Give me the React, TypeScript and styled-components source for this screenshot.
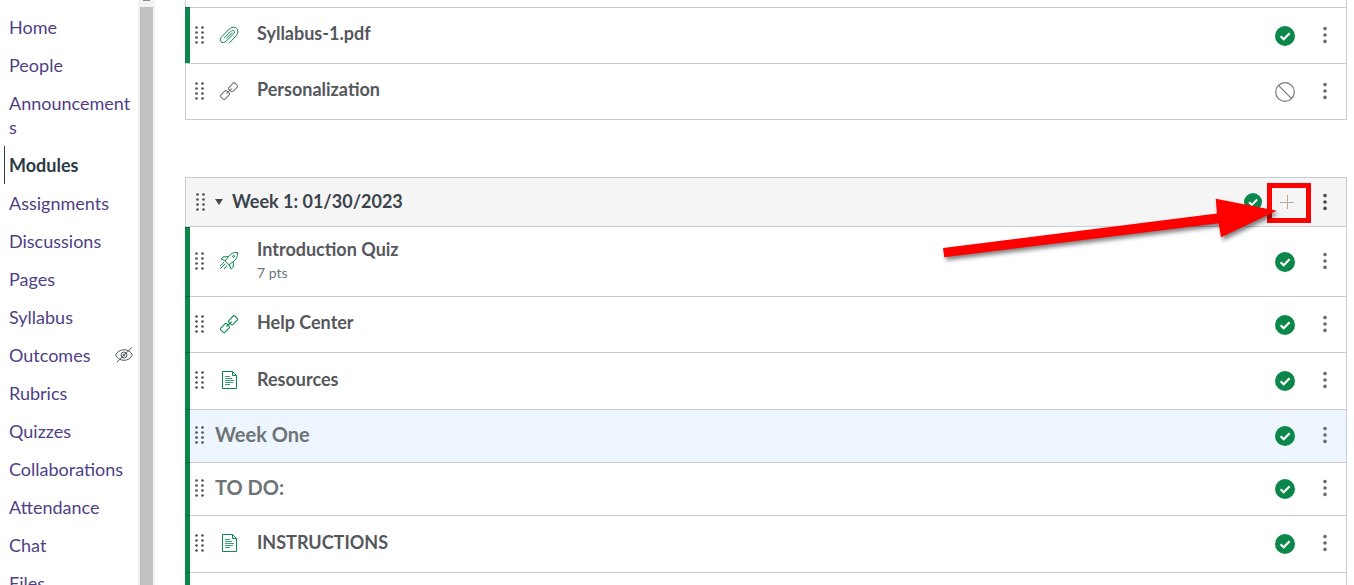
import React from "react";
import styled, { createGlobalStyle } from "styled-components";

const GlobalStyle = createGlobalStyle`
  * { box-sizing: border-box; }
  html, body { margin: 0; padding: 0; }
  body {
    background: #fff;
    font-family: Lato, "Liberation Sans", sans-serif;
    overflow: hidden;
  }
  ul { list-style: none; margin: 0; padding: 0; }
`;

const line = "#c7cdd1";
const green = "#0b874b";

const Page = styled.div`
  display: flex;
  height: 100vh;
  overflow: hidden;
`;

const Sidebar = styled.nav`
  flex: 0 0 138px;
  padding: 8px 5px 0 4px;
`;

const NavLink = styled.a<{ $active?: boolean }>`
  display: flex;
  align-items: center;
  justify-content: space-between;
  padding: 7px 0 7px 4px;
  border-left: 1px solid ${(p) => (p.$active ? "#2d3b45" : "transparent")};
  color: ${(p) => (p.$active ? "#2d3b45" : "#4f3f86")};
  font-size: 18px;
  font-weight: ${(p) => (p.$active ? 700 : 400)};
  line-height: 24px;
  text-decoration: none;
  overflow-wrap: anywhere;
`;

const ScrollTrack = styled.div`
  flex: 0 0 17px;
  display: flex;
  flex-direction: column;
  align-items: center;
  background: #f1f1f1;
`;

const ScrollArrow = styled.div`
  width: 7px;
  height: 1px;
  margin-bottom: 6px;
  background: #8a8a8a;
`;

const ScrollThumb = styled.div`
  flex: 1;
  width: 13px;
  background: #c1c1c1;
`;

const Main = styled.main`
  flex: 1;
  min-width: 0;
  padding: 0 7px 0 30px;
`;

const Module = styled.section`
  position: relative;
  margin-bottom: 57px;
`;

const ModuleHeader = styled.header`
  display: flex;
  align-items: center;
  height: 50px;
  padding: 0 10px;
  border: 1px solid ${line};
  background: #f5f5f5;
`;

const ModuleTitle = styled.h2`
  flex: 1;
  margin: 0;
  padding-bottom: 3px;
  color: #3a444b;
  font-size: 18px;
  font-weight: 700;
  line-height: 24px;
`;

const Items = styled.ul``;

const Row = styled.li<{ $height: number }>`
  display: flex;
  height: ${(p) => p.$height + 1}px;
  margin-top: -1px;
  &:first-child { margin-top: 0; }
`;

const Strip = styled.div<{ $published: boolean }>`
  flex: 0 0 5px;
  border: 1px solid ${(p) => (p.$published ? "#07683a" : line)};
  border-left: ${(p) => (p.$published ? "0" : `1px solid ${line}`)};
  border-right: 0;
  background: ${(p) => (p.$published ? green : "transparent")};
`;

const RowBody = styled.div<{ $highlight?: boolean }>`
  flex: 1;
  display: flex;
  align-items: center;
  padding: 0 10px 2px 5px;
  border: 1px solid ${line};
  border-left: 0;
  background: ${(p) => (p.$highlight ? "#edf5fe" : "#fff")};
  ${Row}:first-child & { border-top-color: transparent; }
`;

const TypeIcon = styled.span`
  flex: 0 0 20px;
  display: flex;
  margin-left: 14px;
`;

const ItemText = styled.div<{ $raised: boolean }>`
  flex: 1;
  margin-left: 18px;
  padding-bottom: ${(p) => (p.$raised ? 3 : 0)}px;
`;

const ItemTitle = styled.a`
  display: block;
  color: #55585c;
  font-size: 18px;
  font-weight: 700;
  line-height: 24px;
  text-decoration: none;
`;

const ItemPoints = styled.div`
  color: #6b7780;
  font-size: 14px;
  line-height: 24px;
`;

const SubHeader = styled.h3`
  flex: 1;
  margin: 0 0 0 10px;
  padding-bottom: 2px;
  color: #6e7376;
  font-size: 20px;
  font-weight: 700;
  line-height: 24px;
`;

const IconButton = styled.button<{ $width: number }>`
  display: flex;
  align-items: center;
  justify-content: center;
  width: ${(p) => p.$width}px;
  height: 30px;
  padding: 0;
  border: 0;
  background: none;
`;

const StatusButton = styled(IconButton)`
  margin-right: 9px;
  padding-top: 2px;
`;

const HeaderActions = styled.div`
  display: flex;
  margin-right: -8px;
`;

const Callout = styled.svg`
  position: absolute;
  top: 1px;
  right: 26px;
  pointer-events: none;
`;

const DragDots = () => (
  <svg width="10" height="20" viewBox="0 0 10 20" fill="#4f5358" aria-hidden="true">
    {[1.5, 7.5].map((x) =>
      [2.5, 7.5, 12.5, 17.5].map((y) => <circle key={`${x}-${y}`} cx={x} cy={y} r="1.35" />)
    )}
  </svg>
);

const Kebab = ({ dark = false }: { dark?: boolean }) => (
  <svg width="6" height="18" viewBox="0 0 6 18" fill={dark ? "#45494c" : "#6a6d70"} aria-hidden="true">
    <circle cx="3" cy="2.6" r="1.8" />
    <circle cx="3" cy="9" r="1.8" />
    <circle cx="3" cy="15.4" r="1.8" />
  </svg>
);

const Check = ({ size = 20 }: { size?: number }) => (
  <svg width={size} height={size} viewBox="0 0 20 20" aria-hidden="true">
    <circle cx="10" cy="10" r="10" fill={green} />
    <path d="M5.6 10.2 8.7 13.2 14.6 7.3" fill="none" stroke="#fff" strokeWidth="2.2" />
  </svg>
);

const Blocked = () => (
  <svg width="20" height="20" viewBox="0 0 20 20" fill="none" stroke="#73777b" strokeWidth="1.2" aria-hidden="true">
    <circle cx="10" cy="10" r="9.3" />
    <path d="M3.4 3.4 16.6 16.6" />
  </svg>
);

const Clip = () => (
  <svg width="20" height="20" viewBox="0 0 20 20" fill="none" stroke={green} strokeWidth="1" strokeLinecap="round" aria-hidden="true">
    <path d="M10.3 18 16.8 11.2C19 8.9 19.6 5.3 17.7 3.4 15.8 1.5 12.5 1.9 10.3 4.1L3.1 11.3C1.1 13.3.7 15.6 2 16.9 3.4 18.2 5.7 17.7 7.6 15.8L14.1 9.3C15.4 8 15.7 6.7 14.9 5.9 14.1 5.1 12.7 5.4 11.5 6.6L5.4 12.7" />
    <path d="M7.6 13.3 13 7.9" />
  </svg>
);

const Chain = ({ color }: { color: string }) => (
  <svg width="20" height="20" viewBox="0 0 20 20" fill="none" stroke={color} strokeWidth="1.1" strokeLinejoin="round" aria-hidden="true">
    <path d="M9.5 7.2 14 2.1Q14.9 1.1 15.9 2L18.2 4.3Q19 5.2 18.2 6.1L14 10.4Q13.1 11.2 12.2 10.4L9.6 8.1Q9.1 7.7 9.5 7.2Z" />
    <path d="M1.7 14.1 6 9.8Q6.9 9 7.8 9.8L10.2 12.1Q11 13 10.2 13.9L6 18.2Q5.1 19 4.2 18.2L1.8 15.9Q.9 15 1.7 14.1Z" />
    <path d="M7.4 12.6 12.7 7.6" />
  </svg>
);

const Rocket = () => (
  <svg width="20" height="20" viewBox="0 0 20 20" fill="none" stroke={green} strokeWidth="1" strokeLinejoin="round" aria-hidden="true">
    <path d="M18.5 1.5C14.5 1.2 11.8 2.7 9.7 5.3L6.2 10 10 13.8 14.7 10.3C17.3 8.2 18.8 5.5 18.5 1.5Z" />
    <path d="M9.4 5.6 4 5.9 2.2 8.1 6.5 9.8M14.4 10.6 14.3 16 12.2 18.1 10.2 13.5" />
    <path d="M5.2 11 1.1 15.1M6.2 12.8 1.4 17.6M8.3 14.2 5 18" />
    <circle cx="14.6" cy="5.4" r=".9" />
  </svg>
);

const Doc = () => (
  <svg width="20" height="20" viewBox="0 0 20 20" fill="none" stroke={green} aria-hidden="true">
    <path d="M3.5 1.5H13.5L17.5 5.5V18.5H3.5ZM13.5 1.5V5.5H17.5" />
    <path d="M6 6.5H11M6 8.5H13M6 10.5H15M6 12.5H14M6 14.5H11" strokeWidth=".8" />
  </svg>
);

const HiddenEye = () => (
  <svg width="18" height="16" viewBox="0 0 18 16" fill="none" stroke="#4b5963" strokeWidth="1" aria-hidden="true">
    <path d="M.6 8C2.5 4.4 5.5 2.7 9 2.7S15.5 4.4 17.4 8C15.5 11.6 12.5 13.3 9 13.3S2.5 11.6.6 8Z" />
    <circle cx="9" cy="8" r="3" />
    <circle cx="9" cy="8" r="1" />
    <path d="M1.8 15.3 16.7.6" />
  </svg>
);

const Plus = () => (
  <svg width="14" height="14" viewBox="0 0 14 14" aria-hidden="true">
    <path d="M0 7.5H14" stroke="#a9a9ab" />
    <path d="M7.5 0V14" stroke="#d0a478" />
  </svg>
);

const Triangle = () => (
  <svg width="8" height="6" viewBox="0 0 8 6" fill="#45494d" aria-hidden="true">
    <path d="M0 0H8L4 6Z" />
  </svg>
);

type ItemKind = "file" | "link" | "quiz" | "page" | "heading";

interface Item {
  title: string;
  kind: ItemKind;
  points?: string;
  unpublished?: boolean;
  highlight?: boolean;
}

const iconFor = (item: Item) => {
  switch (item.kind) {
    case "file":
      return <Clip />;
    case "quiz":
      return <Rocket />;
    case "page":
      return <Doc />;
    default:
      return <Chain color={item.unpublished ? "#73777b" : green} />;
  }
};

const rowHeights: Record<ItemKind, number> = {
  file: 56,
  link: 56,
  quiz: 69,
  page: 57,
  heading: 53,
};

const ModuleItem = ({ item }: { item: Item }) => (
  <Row $height={rowHeights[item.kind]}>
    <Strip $published={!item.unpublished} />
    <RowBody $highlight={item.highlight}>
      <DragDots />
      {item.kind === "heading" ? (
        <SubHeader>{item.title}</SubHeader>
      ) : (
        <>
          <TypeIcon>{iconFor(item)}</TypeIcon>
          <ItemText $raised={!item.points}>
            <ItemTitle href="#">{item.title}</ItemTitle>
            {item.points && <ItemPoints>{item.points}</ItemPoints>}
          </ItemText>
        </>
      )}
      <StatusButton $width={40} aria-label={item.unpublished ? "Unpublished" : "Published"}>
        {item.unpublished ? <Blocked /> : <Check />}
      </StatusButton>
      <IconButton $width={22} aria-label="Options">
        <Kebab />
      </IconButton>
    </RowBody>
  </Row>
);

const LeadRow = styled.div`
  height: 7px;
  border: solid ${line};
  border-width: 0 1px;
`;

const navItems = [
  "Home", "People", "Announcements", "Modules", "Assignments", "Discussions", "Pages", "Syllabus",
  "Outcomes", "Rubrics", "Quizzes", "Collaborations", "Attendance", "Chat", "Files",
];

const introItems: Item[] = [
  { title: "Syllabus-1.pdf", kind: "file" },
  { title: "Personalization", kind: "link", unpublished: true },
];

const weekItems: Item[] = [
  { title: "Introduction Quiz", kind: "quiz", points: "7 pts" },
  { title: "Help Center", kind: "link" },
  { title: "Resources", kind: "page" },
  { title: "Week One", kind: "heading", highlight: true },
  { title: "TO DO:", kind: "heading" },
  { title: "INSTRUCTIONS", kind: "page" },
  { title: "", kind: "page" },
];

const ContinuedItems = styled(Items)`
  ${Row}:first-child ${RowBody} { border-top-color: ${line}; }
`;

export default function App() {
  return (
    <>
      <GlobalStyle />
      <Page>
        <Sidebar aria-label="Course">
          <ul>
            {navItems.map((name) => (
              <li key={name}>
                <NavLink href="#" $active={name === "Modules"}>
                  {name}
                  {name === "Outcomes" && <HiddenEye />}
                </NavLink>
              </li>
            ))}
          </ul>
        </Sidebar>
        <ScrollTrack aria-hidden="true">
          <ScrollArrow />
          <ScrollThumb />
        </ScrollTrack>
        <Main>
          <Module>
            <LeadRow />
            <ContinuedItems>
              {introItems.map((item) => (
                <ModuleItem key={item.title} item={item} />
              ))}
            </ContinuedItems>
          </Module>
          <Module>
            <ModuleHeader>
              <DragDots />
              <IconButton $width={26} aria-label="Collapse module">
                <Triangle />
              </IconButton>
              <ModuleTitle>Week 1: 01/30/2023</ModuleTitle>
              <HeaderActions>
                <IconButton $width={30} aria-label="Module published">
                  <Check size={18} />
                </IconButton>
                <IconButton $width={38} aria-label="Add item">
                  <Plus />
                </IconButton>
                <IconButton $width={38} aria-label="Module options">
                  <Kebab dark />
                </IconButton>
              </HeaderActions>
            </ModuleHeader>
            <Items>
              {weekItems.map((item) => (
                <ModuleItem key={item.title} item={item} />
              ))}
            </Items>
            <Callout width="400" height="110" viewBox="0 0 400 110" aria-hidden="true">
              <rect x="348.5" y="7.5" width="39" height="35" fill="none" stroke="#fe0000" strokeWidth="5" />
              <path
                d="M22 70 296 35.5 294.7 20.7 355.7 32.7 300 59.3 297.7 45.3 23.3 79.3Z"
                fill="#fe0000"
                style={{ filter: "drop-shadow(2px 3px 2px rgba(0,0,0,.5))" }}
              />
            </Callout>
          </Module>
        </Main>
      </Page>
    </>
  );
}
